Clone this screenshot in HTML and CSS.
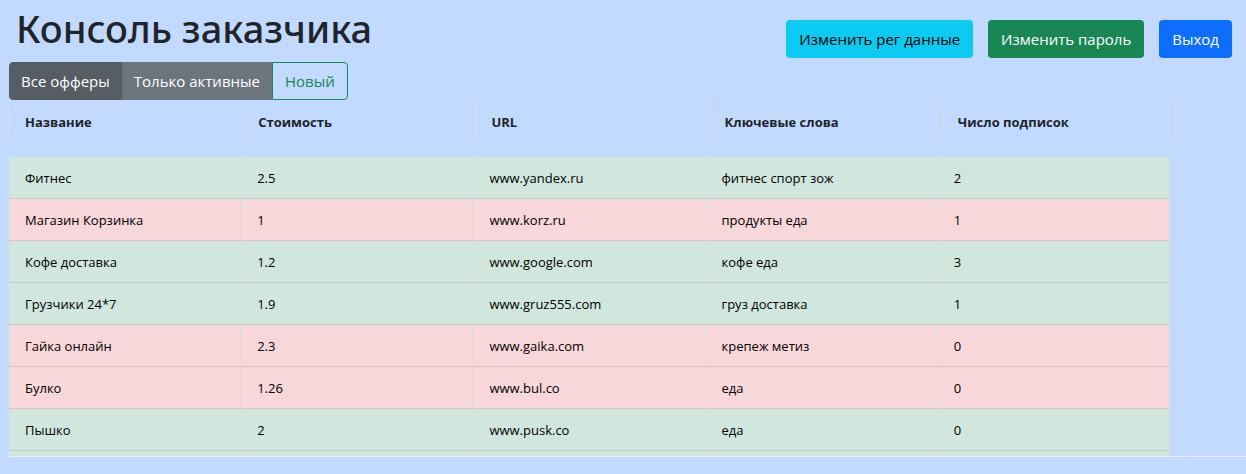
FILE: index.html
```html
<!DOCTYPE html>
<html lang="ru">
<head>
<meta charset="utf-8">
<meta name="viewport" content="width=device-width, initial-scale=1">
<title>Консоль заказчика</title>
<link rel="stylesheet" href="styles.css">
</head>
<body>
<header class="topbar">
  <h1 class="title">Консоль заказчика</h1>
  <nav class="actions">
    <button type="button" class="btn btn-info">Изменить рег данные</button>
    <button type="button" class="btn btn-success">Изменить пароль</button>
    <button type="button" class="btn btn-primary">Выход</button>
  </nav>
</header>
<main class="content">
  <div class="filters" role="group">
    <button type="button" class="btn btn-secondary active">Все офферы</button>
    <button type="button" class="btn btn-secondary">Только активные</button>
    <button type="button" class="btn btn-outline">Новый</button>
  </div>
  <table class="offers">
    <thead>
      <tr><th scope="col">Название</th><th scope="col">Стоимость</th><th scope="col">URL</th><th scope="col">Ключевые слова</th><th scope="col">Число подписок</th></tr>
    </thead>
    <tbody>
      <tr class="on"><td>Фитнес</td><td>2.5</td><td>www.yandex.ru</td><td>фитнес спорт зож</td><td>2</td></tr>
      <tr class="off"><td>Магазин Корзинка</td><td>1</td><td>www.korz.ru</td><td>продукты еда</td><td>1</td></tr>
      <tr class="on"><td>Кофе доставка</td><td>1.2</td><td>www.google.com</td><td>кофе еда</td><td>3</td></tr>
      <tr class="on"><td>Грузчики 24*7</td><td>1.9</td><td>www.gruz555.com</td><td>груз доставка</td><td>1</td></tr>
      <tr class="off"><td>Гайка онлайн</td><td>2.3</td><td>www.gaika.com</td><td>крепеж метиз</td><td>0</td></tr>
      <tr class="off"><td>Булко</td><td>1.26</td><td>www.bul.co</td><td>еда</td><td>0</td></tr>
      <tr class="on"><td>Пышко</td><td>2</td><td>www.pusk.co</td><td>еда</td><td>0</td></tr>
      <tr class="on"><td></td><td></td><td></td><td></td><td></td></tr>
    </tbody>
  </table>
</main>
</body>
</html>
```
FILE: styles.css
```css
* {
  box-sizing: border-box;
}

body {
  margin: 0;
  background: #c2daff;
  color: #212529;
  font-family: "Open Sans", "Noto Sans", sans-serif;
  font-size: 16px;
  line-height: 24px;
}

.topbar {
  display: flex;
  justify-content: space-between;
  align-items: flex-start;
  padding: 4px 14px 4px 16px;
}

.title {
  margin: 0;
  font-family: "Noto Sans", "Open Sans", sans-serif;
  font-size: 38px;
  font-weight: 500;
  line-height: 48px;
}

.actions {
  display: flex;
  gap: 15px;
  padding-top: 16px;
}

.btn {
  padding: 6px 12px;
  border: 1px solid transparent;
  border-radius: 4px;
  font-family: inherit;
  font-size: 15px;
  line-height: 24px;
  white-space: nowrap;
}

.btn-info {
  background: #0dcaf0;
  color: #000;
}

.btn-success {
  background: #198754;
  color: #fff;
}

.btn-primary {
  background: #0d6efd;
  color: #fff;
}

.content {
  padding-left: 9px;
}

.filters {
  display: flex;
}

.filters .btn {
  padding: 6px 11px;
  border-radius: 0;
}

.filters .btn:first-child {
  border-radius: 4px 0 0 4px;
}

.filters .btn:last-child {
  padding: 6px 12px;
  border-radius: 0 4px 4px 0;
}

.filters .btn-secondary {
  background: #6c757d;
  color: #fff;
}

.filters .btn-secondary.active {
  background: #565e64;
  border-color: #51585e;
}

.btn-outline {
  background: transparent;
  border-color: #198754;
  color: #198754;
}

.offers {
  display: block;
  font-size: 13px;
  line-height: 18px;
}

.offers thead,
.offers tbody {
  display: block;
}

.offers tr {
  display: table;
  table-layout: fixed;
  border-collapse: separate;
  border-spacing: 0;
}

.offers thead {
  padding-bottom: 15px;
}

.offers thead tr {
  width: calc(100% - 71px);
}

.offers tbody tr {
  width: calc(100% - 76px);
}

.offers th,
.offers td {
  height: 42px;
  padding: 12px 16px 11px;
  text-align: left;
}

.offers th {
  padding-left: 15px;
  border-left: 1px solid #dcdcde;
  font-weight: 700;
}

.offers th:last-child {
  border-right: 1px solid #dcdcde;
}

.offers tbody {
  height: 300px;
  overflow: auto;
  scrollbar-width: none;
  border-bottom: 1px solid #eeeeee;
}

.offers td {
  border-right: 1px solid #d9dbdc;
  border-bottom: 1px solid #bcd0c7;
  color: #000;
}

.on td {
  background: #d1e7dd;
}

.offers .off td {
  background: #f8d7da;
  border-bottom-color: #dfc2c4;
}
```
